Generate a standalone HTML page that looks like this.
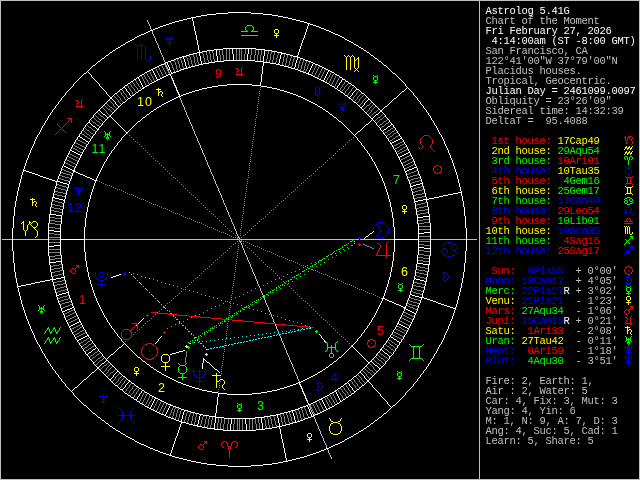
<!DOCTYPE html>
<html lang="en"><head><meta charset="utf-8"><title>Astrolog 5.41G - Chart of the Moment</title>
<style>
html,body{margin:0;padding:0;background:#000}
svg{display:block}
.t{font-family:"Liberation Mono",monospace;font-size:10.5px;letter-spacing:-.3px;white-space:pre}
.h{font-family:"Liberation Sans",sans-serif;font-size:12.5px;text-anchor:middle;letter-spacing:1px}
.g{fill:none;stroke-width:1;stroke-linecap:square}
</style></head><body>
<svg width="640" height="480" viewBox="0 0 640 480">
<defs><filter id="ga" filterUnits="userSpaceOnUse" x="0" y="0" width="640" height="480" color-interpolation-filters="sRGB"><feOffset dx="0" dy="0"/></filter></defs>
<rect width="640" height="480" fill="#000"/>
<g class="g" transform="translate(.5 .5)">
<path stroke="#ffffff" d="M228 12H250M216 13H227M251 13H262M207 14H215M263 14H271M201 15H206M272 15H277M196 16H200M278 16H282M191 17H195M283 17H287M187 18H190M288 18H291M183 19H186M292 19H295M179 20H182M296 20H299M175 21H178M300 21H303M172 22H174M304 22H306M169 23H171M307 23H309M166 24H168M310 24H312M163 25H165M313 25H315M160 26H162M316 26H318M158 27H159M319 27H320M155 28H157M321 28H323M153 29H154M324 29H325M150 30H152M326 30H328M148 31H149M329 31H330M146 32H147M331 32H332M144 33H145M333 33H334M141 34H143M335 34H337M139 35H140M338 35H339M137 36H138M340 36H341M135 37H136M342 37H343M132 39H133M345 39H346M130 40H131M347 40H348M128 41H129M349 41H350M126 42H127M351 42H352M123 44H124M354 44H355M121 45H122M356 45H357M118 47H119M359 47H360M116 48H117M223 48H255M361 48H362M214 49H222M256 49H264M113 50H114M207 50H213M264 50H271M364 50H365M202 51H206M272 51H276M110 52H111M197 52H201M277 52H281M367 52H368M193 53H196M281 53H285M189 54H192M286 54H289M106 55H107M186 55H188M290 55H292M371 55H372M182 56H185M293 56H297M179 57H181M297 57H299M102 58H103M176 58H178M300 58H302M375 58H376M174 59H175M303 59H304M171 60H173M224 60H254M305 60H307M98 61H99M168 61H170M215 61H223M255 61H263M308 61H310M379 61H380M166 62H167M209 62H214M263 62H269M311 62H312M164 63H165M203 63H208M270 63H275M313 63H314M161 64H163M199 64H202M276 64H279M315 64H317M93 65H94M159 65H160M195 65H198M280 65H283M318 65H319M384 65H385M157 66H158M191 66H194M284 66H287M320 66H321M155 67H156M188 67H190M288 67H290M322 67H323M153 68H154M184 68H187M291 68H294M324 68H325M151 69H152M181 69H183M295 69H297M326 69H327M149 70H150M179 70H180M298 70H299M328 70H329M147 71H148M176 71H178M300 71H302M330 71H331M145 72H146M173 72H175M303 72H305M332 72H333M84 73H85M171 73H172M306 73H308M393 73H394M142 74H143M168 74H170M308 74H310M335 74H336M140 75H141M166 75H167M311 75H312M337 75H338M164 76H165M313 76H314M137 77H138M162 77H163M315 77H316M340 77H341M160 78H161M317 78H318M134 79H135M157 79H159M319 79H320M342 79H344M156 80H157M321 80H323M131 81H132M154 81H155M323 81H324M346 81H347M152 82H153M325 82H326M128 83H129M150 83H151M327 83H328M349 83H350M227 84H251M125 85H126M147 85H148M218 85H226M252 85H260M330 85H331M352 85H353M145 86H146M212 86H217M261 86H266M332 86H333M123 87H124M143 87H144M207 87H211M267 87H271M142 88H143M202 88H206M272 88H276M335 88H336M120 89H121M199 89H201M277 89H279M356 89H358M139 90H140M195 90H198M280 90H283M338 90H339M192 91H194M284 91H286M402 91H403M136 92H137M189 92H191M287 92H289M341 92H342M115 93H116M186 93H188M290 93H292M362 93H363M183 94H185M293 94H295M132 95H133M181 95H182M296 95H297M345 95H346M178 96H180M298 96H300M110 97H111M176 97H177M301 97H302M348 97H349M110 98H111M128 98H129M174 98H175M303 98H304M349 98H350M394 98H395M172 99H173M305 99H306M368 99H369M170 100H171M307 100H308M168 101H169M309 101H310M123 102H124M166 102H167M311 102H312M354 102H355M164 103H165M313 103H314M162 104H163M315 104H316M118 106H119M159 106H160M318 106H319M385 106H386M157 107H158M320 107H321M360 107H361M154 109H155M323 109H324M98 110H99M380 110H381M151 111H152M326 111H327M380 111H381M103 114H104M147 114H148M330 114H331M376 114H377M109 116H110M107 117H108M143 117H144M334 117H335M371 118H372M138 121H139M339 121H340M88 122H89M366 124H367M391 124H392M93 126H94M388 126H389M97 129H98M384 129H385M358 131H359M126 132H127M78 136H79M80 137H81M400 138H401M83 139H84M398 139H399M396 140H397M86 141H87M394 141H395M392 142H393M390 143H391M70 150H71M72 151H73M74 152H75M408 152H409M76 153H77M406 153H407M78 154H79M404 154H405M80 155H81M402 155H403M400 156H401M398 157H399M64 166H65M66 167H67M414 167H416M68 168H69M412 168H413M70 169H71M409 169H411M23 170H25M72 170H74M407 170H408M26 171H28M73 171H75M405 171H406M29 172H31M76 172H77M32 173H34M78 173H79M35 174H37M80 174H82M38 175H39M83 175H84M40 176H42M85 176H86M43 177H45M87 177H89M46 178H48M90 178H91M49 179H51M92 179H93M52 180H54M94 180H96M55 181H59M60 182H62M63 183H66M420 183H422M67 184H68M416 184H419M413 185H415M410 186H412M458 192H461M453 193H457M448 194H452M443 195H447M439 196H442M52 197H54M434 197H438M55 198H58M429 198H433M59 199H62M423 199H428M63 200H64M418 200H422M414 201H417M49 214H55M56 215H61M423 216H429M417 217H422M48 230H53M54 231H60M424 232H430M370 233H371M418 233H423M366 236H367M60 239H84M394 239H418M54 245H60M48 246H53M418 247H423M424 248H430M56 261H61M49 262H55M417 263H422M423 264H429M119 274H120M116 275H118M113 276H115M61 277H64M111 277H112M56 278H60M414 278H415M50 279H55M416 279H419M45 280H49M420 280H423M40 281H44M424 281H426M35 282H39M31 283H34M26 284H30M21 285H25M17 286H20M66 292H68M62 293H65M59 294H61M410 294H411M56 295H58M412 295H414M415 296H418M419 297H423M382 298H384M424 298H426M385 299H386M427 299H429M387 300H388M430 300H432M389 301H391M433 301H435M392 302H393M436 302H437M394 303H395M438 303H440M396 304H398M441 304H443M399 305H400M444 305H446M401 306H402M447 306H449M72 307H73M403 307H405M450 307H452M70 308H71M404 308H405M453 308H455M67 309H69M406 309H407M65 310H66M408 310H409M62 311H64M410 311H411M412 312H413M414 313H415M79 321H80M77 322H78M75 323H76M397 323H398M73 324H74M399 324H400M71 325H72M401 325H402M69 326H70M403 326H404M405 327H406M407 328H408M87 335H88M85 336H86M83 337H84M391 337H392M81 338H82M79 339H80M394 339H395M77 340H78M397 341H398M399 342H400M351 346H352M119 347H120M93 349H94M380 349H381M183 350H184M179 351H182M89 352H90M176 352H178M172 353H175M385 353H386M86 354H87M111 354H112M170 354H171M389 356H390M138 357H139M339 357H340M203 359H204M106 360H107M143 361H144M334 361H335M370 361H371M207 362H208M368 362H369M102 363H103M147 364H148M330 364H331M375 365H376M97 367H98M151 367H152M326 367H327M97 368H98M379 368H380M154 369H155M215 369H216M323 369H324M117 371H118M157 371H158M320 371H321M92 372H93M159 372H160M318 372H319M359 372H360M162 374H163M315 374H316M164 375H165M313 375H314M123 376H124M166 376H167M311 376H312M354 376H355M168 377H169M309 377H310M170 378H171M307 378H308M84 379H85M109 379H110M172 379H173M305 379H306M128 380H129M174 380H175M303 380H304M349 380H350M367 380H368M129 381H130M176 381H177M301 381H302M367 381H368M178 382H180M298 382H300M132 383H133M181 383H182M296 383H297M345 383H346M183 384H185M293 384H295M115 385H116M186 385H188M290 385H292M362 385H363M136 386H137M189 386H191M287 386H289M341 386H342M75 387H76M192 387H194M284 387H286M139 388H140M195 388H198M280 388H283M338 388H339M120 389H122M199 389H201M277 389H279M357 389H358M142 390H143M202 390H206M272 390H276M335 390H336M207 391H211M267 391H271M334 391H335M354 391H355M145 392H146M212 392H217M261 392H266M332 392H333M125 393H126M147 393H148M218 393H226M252 393H260M330 393H331M352 393H353M227 394H251M128 395H129M150 395H151M327 395H328M349 395H350M152 396H153M325 396H326M131 397H132M154 397H155M323 397H324M346 397H347M155 398H157M321 398H322M134 399H136M158 399H159M319 399H321M343 399H344M160 400H161M317 400H318M137 401H138M162 401H163M315 401H316M340 401H341M164 402H165M313 402H314M140 403H141M166 403H167M311 403H312M337 403H338M142 404H143M168 404H170M308 404H310M335 404H336M84 405H85M170 405H172M306 405H307M393 405H394M145 406H146M173 406H175M303 406H305M332 406H333M147 407H148M176 407H178M300 407H302M330 407H331M149 408H150M179 408H180M298 408H299M328 408H329M151 409H152M181 409H183M295 409H297M326 409H327M153 410H154M184 410H187M291 410H294M324 410H325M155 411H156M188 411H190M288 411H290M322 411H323M157 412H158M191 412H194M284 412H287M320 412H321M93 413H94M159 413H160M195 413H198M280 413H283M318 413H319M384 413H385M161 414H163M199 414H202M276 414H279M315 414H317M164 415H165M203 415H208M270 415H275M313 415H314M166 416H167M209 416H215M264 416H269M311 416H312M98 417H99M168 417H170M215 417H223M255 417H263M308 417H310M379 417H380M171 418H173M224 418H254M305 418H307M174 419H175M303 419H304M102 420H103M176 420H178M300 420H302M375 420H376M179 421H181M297 421H299M181 422H185M293 422H296M106 423H107M186 423H188M290 423H292M371 423H372M189 424H192M286 424H289M193 425H197M282 425H285M110 426H111M197 426H201M277 426H281M367 426H368M202 427H206M272 427H276M113 428H114M207 428H214M265 428H271M364 428H365M214 429H222M256 429H264M116 430H117M223 430H255M361 430H362M118 431H119M359 431H360M121 433H122M356 433H357M123 434H124M354 434H355M126 436H127M351 436H352M128 437H129M349 437H350M130 438H131M347 438H348M132 439H133M345 439H346M135 441H136M342 441H343M137 442H138M340 442H341M139 443H140M338 443H339M141 444H143M335 444H337M144 445H145M333 445H334M146 446H147M331 446H332M148 447H149M329 447H330M150 448H152M326 448H328M153 449H154M324 449H325M155 450H157M321 450H323M158 451H159M319 451H320M160 452H162M316 452H318M163 453H165M313 453H315M166 454H168M310 454H312M169 455H171M307 455H309M172 456H174M304 456H306M175 457H178M300 457H303M179 458H182M296 458H299M183 459H186M292 459H295M187 460H190M288 460H291M191 461H195M283 461H287M196 462H200M278 462H282M201 463H206M272 463H277M207 464H215M263 464H271M216 465H227M251 465H262M228 466H250M12 228V250M13 216V227M13 251V262M14 207V215M14 263V271M15 201V206M15 272V277M16 196V200M16 278V282M17 191V195M17 283V285M17 287h0M18 187V190M18 288V291M19 183V186M19 292V295M20 179V182M20 296V299M21 175V178M21 300V303M22 172V174M22 304V306M23 169h0M23 171h0M23 307V309M24 166V168M24 310V312M25 163V165M25 313V315M26 160V162M26 316V318M27 158V159M27 319V320M28 155V157M28 321V323M29 153V154M29 324V325M30 150V152M30 326V328M31 148V149M31 329V330M32 146V147M32 331V332M33 144V145M33 333V334M34 141V143M34 335V337M35 139V140M35 338V339M36 137V138M36 340V341M37 135V136M37 342V343M38 134h0M38 344h0M39 132V133M39 345V346M40 130V131M40 347V348M41 128V129M41 349V350M42 126V127M42 351V352M43 125h0M43 353h0M44 123V124M44 354V355M45 121V122M45 356V357M46 120h0M46 358h0M47 118V119M47 359V360M48 116V117M48 223V229M48 231V245M48 247V255M48 361V362M49 115h0M49 215V222M49 256V261M49 263V264M49 363h0M50 113V114M50 207V213M50 265V271M50 364V365M51 112h0M51 202V206M51 272V276M51 366h0M52 110V111M52 198V201M52 277V278M52 280V281M52 367V368M53 109h0M53 193V196M53 282V285M53 369h0M54 108h0M54 189V192M54 286V289M54 370h0M55 106V107M55 186V188M55 290V292M55 371V372M56 105h0M56 182V185M56 293V294M56 296h0M56 373h0M57 104h0M57 179V180M57 297V299M57 374h0M58 102V103M58 176V178M58 300V302M58 375V376M59 101h0M59 174V175M59 303V304M59 377h0M60 100h0M60 171V173M60 224V230M60 232V238M60 240V244M60 246V254M60 305V307M60 378h0M61 98V99M61 168V170M61 216V223M61 255V260M61 262V263M61 308V310M61 379V380M62 97h0M62 166V167M62 209V214M62 264V269M62 312h0M62 381h0M63 96h0M63 164V165M63 203V208M63 270V275M63 313V314M63 382h0M64 95h0M64 161V163M64 199h0M64 201V202M64 276h0M64 278V279M64 315V317M64 383h0M65 93V94M65 159V160M65 195V198M65 280V283M65 318V319M65 384V385M66 92h0M66 157V158M66 191V194M66 284V287M66 320V321M66 386h0M67 91h0M67 155V156M67 188V190M67 288V290M67 322V323M67 387h0M68 90h0M68 153V154M68 185V187M68 291h0M68 293V294M68 324V325M68 388h0M69 89h0M69 151V152M69 181V183M69 295V297M69 327h0M69 389h0M70 88h0M70 149h0M70 179V180M70 298V299M70 328V329M70 390h0M71 87h0M71 147V148M71 176V178M71 300V302M71 330V331M71 391h0M72 86h0M72 145V146M72 173V175M72 303V305M72 332V333M72 390h0M72 392h0M73 84V85M73 144h0M73 172h0M73 306h0M73 334h0M73 389h0M73 393V394M74 83h0M74 142V143M74 168V169M74 308V310M74 335V336M74 388h0M74 395h0M75 82h0M75 140V141M75 166V167M75 311V312M75 337V338M75 396h0M76 81h0M76 139h0M76 164V165M76 313V314M76 339h0M76 397h0M77 80h0M77 137V138M77 162V163M77 315V316M77 341h0M77 386h0M77 398h0M78 79h0M78 160V161M78 317V318M78 342h0M78 385h0M78 399h0M79 78h0M79 134V135M79 158V159M79 319V320M79 343V344M79 384h0M79 400h0M80 77h0M80 133h0M80 156V157M80 322h0M80 345h0M80 383h0M80 401h0M81 76h0M81 131V132M81 154h0M81 323V324M81 346V347M81 382h0M81 402h0M82 75h0M82 130h0M82 138h0M82 152V153M82 325V326M82 348h0M82 381h0M82 403h0M83 74h0M83 128V129M83 150V151M83 327V328M83 349V350M83 380h0M83 404h0M84 127h0M84 149h0M84 227V238M84 240V251M84 329h0M84 351h0M85 125V126M85 140h0M85 147V148M85 218V226M85 252V260M85 330V331M85 352V353M86 72h0M86 124h0M86 145V146M86 212V217M86 261V266M86 332V333M86 378h0M86 406h0M87 71h0M87 123h0M87 144h0M87 207V211M87 267V271M87 334h0M87 355h0M87 377h0M87 407h0M88 70h0M88 72h0M88 142V143M88 202V206M88 272V276M88 336h0M88 353h0M88 356h0M88 376h0M88 408h0M89 69h0M89 73h0M89 120V121M89 141h0M89 199V201M89 277V279M89 337h0M89 357V358M89 375h0M89 409h0M90 68h0M90 74h0M90 119h0M90 123h0M90 139V140M90 195V198M90 280V283M90 338V339M90 359h0M90 374h0M90 410h0M91 67h0M91 75V76M91 118h0M91 124h0M91 138h0M91 192V194M91 284V286M91 340h0M91 351h0M91 360h0M91 373h0M91 411h0M92 66h0M92 77h0M92 117h0M92 125h0M92 136V137M92 189V191M92 287V289M92 341V342M92 350h0M92 361h0M92 412h0M93 78h0M93 115V116M93 135h0M93 186V188M93 290V292M93 343h0M93 362V363M94 79h0M94 114h0M94 134h0M94 183V185M94 293V295M94 344h0M94 364h0M94 371h0M95 64h0M95 80h0M95 113h0M95 127h0M95 132V133M95 181V182M95 296V297M95 345V346M95 348h0M95 365h0M95 370h0M95 414h0M96 63h0M96 81h0M96 112h0M96 128h0M96 131h0M96 178V179M96 298V300M96 347h0M96 366h0M96 369h0M96 415h0M97 62h0M97 82h0M97 111h0M97 130h0M97 176V177M97 301V302M97 348h0M97 416h0M98 83h0M98 128h0M98 174V175M98 303V304M98 349V350M99 84V85M99 109h0M99 127h0M99 172V173M99 305V306M99 351h0M99 366h0M99 369h0M100 60h0M100 86h0M100 108h0M100 111h0M100 126h0M100 170V171M100 307V308M100 352h0M100 365h0M100 370h0M100 418h0M101 59h0M101 87h0M101 107h0M101 112h0M101 125h0M101 168V169M101 309V310M101 353h0M101 364h0M101 371h0M101 419h0M102 88h0M102 106h0M102 113h0M102 123V124M102 166V167M102 311V312M102 354V355M102 372h0M103 89h0M103 105h0M103 122h0M103 164V165M103 313V314M103 356h0M103 373h0M104 57h0M104 90h0M104 104h0M104 121h0M104 162V163M104 315V316M104 357h0M104 362h0M104 374h0M104 421h0M105 56h0M105 91h0M105 103h0M105 115h0M105 120h0M105 161h0M105 317h0M105 358h0M105 361h0M105 375h0M105 422h0M106 92V93M106 102h0M106 116h0M106 119h0M106 159V160M106 318V319M106 359h0M106 376h0M107 94h0M107 101h0M107 118h0M107 157V158M107 320V321M107 358h0M107 377h0M108 54h0M108 95h0M108 100h0M108 156h0M108 322h0M108 357h0M108 361h0M108 378h0M108 424h0M109 53h0M109 96h0M109 99h0M109 154V155M109 323V324M109 356h0M109 362h0M109 425h0M110 115h0M110 153h0M110 325h0M110 355h0M110 363h0M110 380h0M111 114h0M111 117h0M111 151V152M111 326V327M111 364h0M111 378h0M111 381h0M112 51h0M112 96h0M112 99h0M112 113h0M112 118h0M112 150h0M112 328h0M112 365h0M112 377h0M112 382h0M112 427h0M113 95h0M113 100h0M113 112h0M113 119h0M113 149h0M113 329h0M113 353h0M113 366h0M113 375V376M113 383h0M114 94h0M114 101h0M114 111h0M114 120h0M114 147V148M114 330V331M114 352h0M114 367h0M114 374h0M114 384h0M115 49h0M115 102V103M115 110h0M115 121h0M115 146h0M115 332h0M115 351h0M115 368h0M115 373h0M115 429h0M116 104h0M116 109h0M116 122h0M116 145h0M116 333h0M116 350h0M116 369h0M116 372h0M117 92h0M117 105h0M117 108h0M117 123h0M117 143V144M117 334V335M117 349h0M117 370h0M117 386h0M118 91h0M118 107h0M118 124h0M118 142h0M118 336h0M118 348h0M118 387h0M119 90h0M119 125h0M119 141h0M119 337h0M119 372h0M119 388h0M120 46h0M120 105h0M120 126h0M120 140h0M120 338h0M120 373h0M120 432h0M121 104h0M121 127h0M121 138V139M121 339V340M121 346h0M121 374h0M122 88h0M122 103h0M122 128h0M122 137h0M122 341h0M122 345h0M122 375h0M122 390h0M123 129h0M123 136h0M123 342h0M123 344h0M123 388h0M123 391h0M124 86h0M124 130h0M124 135h0M124 343h0M124 387h0M124 392h0M125 43h0M125 88h0M125 101h0M125 131h0M125 134h0M125 344h0M125 377h0M125 385V386M125 435h0M126 89V90M126 100h0M126 133h0M126 345h0M126 378h0M126 384h0M127 84h0M127 91h0M127 99h0M127 346h0M127 379h0M127 383h0M127 394h0M128 92h0M128 131h0M128 347h0M128 382h0M129 93V94M129 130h0M129 348h0M130 82h0M130 95h0M130 97h0M130 129h0M130 349h0M130 396h0M131 96h0M131 128h0M131 350h0M131 382h0M132 127h0M132 351h0M133 80h0M133 126h0M133 352h0M133 398h0M134 38h0M134 94h0M134 125h0M134 353h0M134 384h0M134 440h0M135 93h0M135 124h0M135 354h0M135 385h0M136 78h0M136 123h0M136 325h0M136 355h0M136 400h0M137 122h0M137 356h0M137 397V398M138 78h0M138 91h0M138 323h0M138 387h0M138 396h0M139 76h0M139 79V80M139 322h0M139 394V395M139 402h0M140 81V82M140 120h0M140 321h0M140 358h0M140 393h0M141 83V84M141 89h0M141 119h0M141 320h0M141 359h0M141 389h0M141 391V392M142 85V86M142 118h0M142 319h0M142 360h0M143 318h0M144 73h0M144 391h0M144 405h0M145 116h0M145 362h0M146 115h0M146 363h0M149 84h0M149 113h0M149 365h0M149 394h0M150 112h0M150 366h0M150 407h0M151 405V406M152 70h0M152 403V404M153 71V72M153 110h0M153 368h0M153 401V402M154 73V74M154 399V400M155 75V76M155 343h0M156 77V78M156 108h0M156 342h0M156 370h0M157 341h0M158 339V340M159 338h0M160 337h0M161 105h0M161 336h0M161 373h0M165 414h0M166 412V413M167 63V64M167 410V411M168 65V66M168 408V409M169 67V69M169 406V407M170 70V71M170 75h0M170 453V454M171 72h0M171 76V77M171 450V452M172 78V79M172 447V449M173 80V82M173 444V446M174 83V84M174 441V443M175 85V86M175 438V440M176 87V89M176 436V437M177 90V91M177 433V435M178 92V93M178 430V432M179 94V95M179 427V429M180 424V426M181 419V420M181 423h0M182 415V418M183 57V58M183 412V414M184 59V61M184 411h0M185 62V65M186 66V67M192 18V20M193 21V25M194 26V30M195 31V34M196 35V39M197 40V44M197 424h0M198 45V49M198 420V423M199 50V51M199 53V55M199 416V419M200 56V60M200 415h0M201 61V63M202 363V368M203 358h0M203 360V362M205 360h0M206 361h0M209 363h0M210 364h0M211 365h0M212 366h0M213 367h0M214 368h0M214 423V427M215 413V415M215 418V422M216 50V55M216 405V412M217 56V60M217 370h0M217 397V404M218 371h0M218 394V396M219 372h0M230 424V429M231 419V423M232 49V53M233 54V59M245 419V423M246 424V429M247 54V59M248 49V53M260 82V84M261 74V81M261 418V422M262 66V73M262 423V428M263 56V60M263 63V65M264 51V55M277 415V417M278 63h0M278 418V422M279 59V62M279 423V425M279 427V428M280 55V58M280 429V433M281 54h0M281 434V438M282 439V442M283 443V447M284 448V452M285 453V457M286 458V460M292 411V412M293 413V415M294 67h0M294 416V419M295 63V66M295 420V421M296 60V62M297 55h0M297 58V59M298 52V54M299 49V51M299 383V384M300 46V48M300 385V386M301 43V45M301 387V388M302 40V42M302 389V391M303 38V39M303 392V393M304 35V37M304 394V395M305 32V34M305 396V398M306 29V31M306 399V400M307 26V28M307 401V402M307 406h0M308 24V25M308 72h0M308 403h0M308 407V408M309 70V71M309 409V411M310 68V69M310 412V413M311 66V67M311 414V415M312 64V65M317 105h0M317 373h0M319 334h0M320 335h0M321 336V337M322 108h0M322 338h0M322 370h0M322 400V401M323 339h0M323 402V403M324 78V79M324 340V341M324 404V405M325 76V77M325 110h0M325 342h0M325 368h0M325 406V407M326 74V75M326 408h0M327 72V73M328 71h0M328 112h0M328 366h0M329 84h0M329 113h0M329 365h0M329 394h0M332 115h0M332 363h0M333 116h0M333 362h0M334 73h0M334 87h0M334 405h0M336 118h0M336 360h0M336 392V393M337 86V87M337 89h0M337 119h0M337 359h0M337 389h0M337 394V395M338 85h0M338 120h0M338 358h0M338 396V397M339 76h0M339 83V84M339 398V399M339 402h0M340 82h0M340 91h0M340 387h0M340 400h0M341 80V81M341 122h0M341 356h0M342 78h0M342 123h0M342 355h0M342 400h0M343 93h0M343 124h0M343 354h0M343 385h0M344 38h0M344 94h0M344 125h0M344 353h0M344 384h0M344 440h0M345 80h0M345 126h0M345 352h0M345 398h0M346 127h0M346 351h0M347 96h0M347 128h0M347 350h0M347 382h0M348 82h0M348 129h0M348 349h0M348 381h0M348 383h0M348 396h0M349 130h0M349 348h0M349 384V385M350 96h0M350 131h0M350 347h0M350 386h0M351 84h0M351 95h0M351 99h0M351 132h0M351 379h0M351 387h0M351 394h0M352 93V94M352 100h0M352 133h0M352 345h0M352 378h0M352 388V389M353 43h0M353 92h0M353 101h0M353 134h0M353 344h0M353 347h0M353 377h0M353 390h0M353 435h0M354 86h0M354 91h0M354 135h0M354 343h0M354 348h0M354 392h0M355 87h0M355 90h0M355 134h0M355 136h0M355 342h0M355 349h0M356 88h0M356 103h0M356 133h0M356 137h0M356 341h0M356 350h0M356 375h0M356 390h0M357 104h0M357 132h0M357 138V139M357 339V340M357 351h0M357 374h0M358 46h0M358 105h0M358 140h0M358 338h0M358 352h0M358 373h0M358 432h0M359 90h0M359 106h0M359 141h0M359 337h0M359 353h0M359 388h0M360 91h0M360 130h0M360 142h0M360 336h0M360 354h0M360 371h0M360 387h0M361 92h0M361 108h0M361 129h0M361 143V144M361 334V335M361 355h0M361 370h0M361 373h0M361 386h0M362 106h0M362 109h0M362 128h0M362 145h0M362 333h0M362 356h0M362 369h0M362 374h0M363 49h0M363 105h0M363 110h0M363 127h0M363 146h0M363 332h0M363 357h0M363 368h0M363 375h0M363 429h0M364 94h0M364 103V104M364 111h0M364 126h0M364 147V148M364 238h0M364 330V331M364 358h0M364 367h0M364 376V377M364 384h0M365 95h0M365 102h0M365 112h0M365 125h0M365 149h0M365 237h0M365 329h0M365 359h0M365 366h0M365 378h0M365 383h0M366 51h0M366 96h0M366 101h0M366 113h0M366 150h0M366 328h0M366 360h0M366 365h0M366 379h0M366 382h0M366 427h0M367 97h0M367 100h0M367 114h0M367 151V152M367 326V327M367 361h0M367 364h0M368 98h0M368 115h0M368 123h0M368 153h0M368 235h0M368 325h0M368 363h0M369 53h0M369 116h0M369 122h0M369 154V155M369 234h0M369 323V324M369 379h0M369 382h0M369 425h0M370 54h0M370 100h0M370 117h0M370 121h0M370 156h0M370 322h0M370 378h0M370 383h0M370 424h0M371 101h0M371 120h0M371 157V158M371 320V321M371 360h0M371 377h0M371 384h0M372 102h0M372 119h0M372 159V160M372 232h0M372 318V319M372 359h0M372 362h0M372 376h0M372 385V386M373 56h0M373 103h0M373 117h0M373 120h0M373 161h0M373 231h0M373 317h0M373 358h0M373 363h0M373 375h0M373 387h0M373 422h0M374 57h0M374 104h0M374 116h0M374 121h0M374 162V163M374 315V316M374 357h0M374 364h0M374 374h0M374 388h0M374 421h0M375 105h0M375 115h0M375 122h0M375 164V165M375 313V314M375 356h0M375 373h0M375 389h0M376 106h0M376 123V124M376 166V167M376 311V312M376 354V355M376 372h0M376 390h0M377 59h0M377 107h0M377 125h0M377 168V169M377 309V310M377 353h0M377 366h0M377 371h0M377 391h0M377 419h0M378 60h0M378 108h0M378 113h0M378 126h0M378 170V171M378 307V308M378 352h0M378 367h0M378 370h0M378 392h0M378 418h0M379 109h0M379 112h0M379 127h0M379 172V173M379 305V306M379 351h0M379 369h0M379 393h0M380 128V129M380 174V175M380 303V304M380 350h0M380 394V395M381 62h0M381 130h0M381 176V177M381 301V302M381 348h0M381 367h0M381 396h0M381 416h0M382 63h0M382 109h0M382 112h0M382 131h0M382 178V180M382 299V300M382 347h0M382 350h0M382 366h0M382 397h0M382 415h0M383 64h0M383 108h0M383 113h0M383 130h0M383 132V133M383 181V182M383 296V297M383 345V346M383 351h0M383 365h0M383 398h0M383 414h0M384 107h0M384 114h0M384 134h0M384 183V185M384 293V295M384 344h0M384 352h0M384 364h0M384 399h0M385 115V116M385 135h0M385 186V188M385 290V292M385 343h0M385 362V363M385 400h0M386 66h0M386 117h0M386 128h0M386 136V137M386 189V191M386 287V289M386 341V342M386 361h0M386 401h0M386 412h0M387 67h0M387 105h0M387 118h0M387 127h0M387 138h0M387 192V194M387 284V286M387 340h0M387 354h0M387 360h0M387 402V403M387 411h0M388 68h0M388 104h0M388 119h0M388 139V140M388 195V198M388 280V283M388 338V339M388 355h0M388 359h0M388 404h0M388 410h0M389 69h0M389 103h0M389 120V121M389 141h0M389 199V201M389 277V279M389 337h0M389 357V358M389 405h0M389 409h0M390 70h0M390 102h0M390 122h0M390 125h0M390 142h0M390 202V206M390 272V276M390 335V336M390 406h0M390 408h0M391 71h0M391 101h0M391 123h0M391 144h0M391 207V211M391 267V271M391 334h0M391 355h0M391 407h0M392 72h0M392 100h0M392 145V146M392 212V217M392 261V266M392 332V333M392 354h0M392 406h0M393 99h0M393 125V126M393 147V148M393 218V226M393 252V260M393 330V331M393 338h0M393 352V353M394 127h0M394 149h0M394 227V238M394 240V251M394 329h0M394 351h0M395 74h0M395 128V129M395 150V151M395 327V328M395 349V350M395 404h0M396 75h0M396 97h0M396 130h0M396 152V153M396 325V326M396 340h0M396 348h0M396 403h0M397 76h0M397 96h0M397 131V132M397 154V155M397 324h0M397 346V347M397 402h0M398 77h0M398 95h0M398 133h0M398 156h0M398 321V322M398 345h0M398 401h0M399 78h0M399 94h0M399 134V135M399 158V159M399 319V320M399 343V344M399 400h0M400 79h0M400 93h0M400 136h0M400 160V161M400 317V318M400 399h0M401 80h0M401 92h0M401 137h0M401 162V163M401 315V316M401 340V341M401 398h0M402 81h0M402 139h0M402 164V165M402 313V314M402 339h0M402 397h0M403 82h0M403 140V141M403 166V167M403 311V312M403 337V338M403 396h0M404 83h0M404 90h0M404 142V143M404 168V170M404 309V310M404 335V336M404 395h0M405 84V85M405 89h0M405 144h0M405 172h0M405 306h0M405 334h0M405 393V394M406 86h0M406 88h0M406 145V146M406 173V175M406 303V305M406 332V333M406 392h0M407 87h0M407 147V148M407 176V178M407 300V302M407 330V331M407 391h0M408 88h0M408 149V150M408 179V180M408 298V299M408 329h0M408 390h0M409 89h0M409 151h0M409 181V183M409 295V297M409 326V327M409 389h0M410 90h0M410 153V154M410 184V185M410 187h0M410 291V293M410 324V325M410 388h0M411 91h0M411 155V156M411 188V190M411 288V290M411 322V323M411 387h0M412 92h0M412 157V158M412 191V194M412 284V287M412 320V321M412 386h0M413 93V94M413 159V160M413 195V198M413 280V283M413 318V319M413 384V385M414 95h0M414 161V163M414 199V200M414 202h0M414 276V277M414 279h0M414 315V317M414 383h0M415 96h0M415 164V165M415 203V208M415 270V275M415 314h0M415 382h0M416 97h0M416 166h0M416 209V214M416 264V269M416 311V312M416 381h0M417 98V99M417 168V170M417 215V216M417 218V223M417 255V262M417 308V310M417 379V380M418 100h0M418 171V173M418 224V232M418 234V238M418 240V246M418 248V254M418 305V307M418 378h0M419 101h0M419 174V175M419 303V304M419 377h0M420 102V103M420 176V178M420 300V302M420 375V376M421 104h0M421 179V181M421 298V299M421 374h0M422 105h0M422 182h0M422 184V185M422 293V296M422 373h0M423 106V107M423 186V188M423 290V292M423 371V372M424 108h0M424 189V192M424 286V289M424 370h0M425 109h0M425 193V196M425 282V285M425 369h0M426 110V111M426 197V198M426 200V201M426 277V280M426 367V368M427 112h0M427 202V206M427 272V276M427 366h0M428 113V114M428 207V213M428 265V271M428 364V365M429 115h0M429 214V215M429 217V222M429 256V263M429 363h0M430 116V117M430 223V231M430 233V247M430 249V255M430 361V362M431 118V119M431 359V360M432 120h0M432 358h0M433 121V122M433 356V357M434 123V124M434 354V355M435 125h0M435 353h0M436 126V127M436 351V352M437 128V129M437 349V350M438 130V131M438 347V348M439 132V133M439 345V346M440 134h0M440 344h0M441 135V136M441 342V343M442 137V138M442 340V341M443 139V140M443 338V339M444 141V143M444 335V337M445 144V145M445 333V334M446 146V147M446 331V332M447 148V149M447 329V330M448 150V152M448 326V328M449 153V154M449 324V325M450 155V157M450 321V323M451 158V159M451 319V320M452 160V162M452 316V318M453 163V165M453 313V315M454 166V168M454 310V312M455 169V171M455 307h0M455 309h0M456 172V174M456 304V306M457 175V178M457 300V303M458 179V182M458 296V299M459 183V186M459 292V295M460 187V190M460 288V291M461 191h0M461 193V195M461 283V287M462 196V200M462 278V282M463 201V206M463 272V277M464 207V215M464 263V271M465 216V227M465 251V262M466 228V250"/>
<path stroke="#c0c0c0" d="M0 0H639M2 239H11M13 239H47M85 239H238M240 239H353M355 239H358M360 239H393M431 239H465M467 239H476M0 479H639M0 1V478M147 20V21M148 22V23M149 24V25M150 26V28M151 29h0M152 31V33M153 34V35M154 36V37M155 38V40M156 41V42M157 43V44M158 45V47M159 48V49M160 50V52M161 53V54M162 55V56M163 57V59M164 60V61M165 62h0M165 64h0M166 65V66M167 67V68M168 69V70M169 72h0M171 78h0M172 80h0M173 83h0M174 85h0M175 87h0M176 90h0M177 92h0M178 94h0M179 97h0M180 98V99M181 100V102M182 103V104M183 105V106M184 107V109M185 110V111M186 112V114M187 115V116M188 117V118M189 119V121M190 122V123M191 124V125M192 126V128M193 129V130M194 131V133M195 134V135M196 136V137M197 138V140M198 141V142M199 143V144M200 145V147M201 148V149M202 150V152M203 153V154M204 155V156M205 157V159M206 160V161M207 162V164M208 165V166M209 167V168M210 169V171M211 172V173M212 174V175M213 176V178M214 179V180M215 181V183M216 184V185M217 186V187M218 188V190M219 191V192M220 193V194M221 195V197M222 198V199M223 200V202M224 203V204M225 205V206M226 207V209M227 210V211M228 212V214M229 215V216M230 217V218M231 219V221M232 222V223M233 224V225M234 226V228M235 229V230M236 231V233M237 234V235M238 236V237M239 238h0M239 240h0M240 241V242M241 243V244M242 245V247M243 248V249M244 250V252M245 253V254M246 255V256M247 257V259M248 260V261M249 262V263M250 264V266M251 267V268M252 269V271M253 272V273M254 274V275M255 276V278M256 279V280M257 281V283M258 284V285M259 286h0M260 288V290M261 291V292M262 293V294M263 295V297M264 298V299M265 300V302M266 303V304M267 305V306M268 307V309M269 310V311M270 312V313M271 314V316M272 317V318M273 319V321M274 322h0M275 324V325M276 326V328M277 329V330M278 331h0M278 333h0M279 335h0M280 336V337M281 338V340M282 341V342M283 343V344M284 345V347M285 348V349M286 350V352M287 353V354M288 355V356M289 357V359M290 360V361M291 362V363M292 364V366M293 367V368M294 369V371M295 372V373M296 374V375M297 376V378M298 379V380M299 381h0M300 384h0M301 386h0M302 388h0M303 391h0M304 393h0M305 395h0M306 398h0M307 400h0M309 405V406M310 407V409M311 410V411M312 412V413M313 414h0M313 416h0M314 417V418M315 419V421M316 422V423M317 424V425M318 426V428M319 429V430M320 431V433M321 434V435M322 436V437M323 438V440M324 441V442M325 443V444M326 445V447M327 449h0M328 450V452M329 453V454M330 455V456M331 457V458M479 1V478M639 1V478"/>
<path stroke="#808080" d="M367 105H368M110 107H111M108 109H109M374 112H375M101 116H102M378 117H379M99 119H100M380 119H381M97 121H98M384 121H385M93 122H94M386 123H387M380 124H381M97 125H98M382 126H383M89 127H90M391 128H392M87 130H88M93 130H94M388 130H389M392 131H393M385 132H386M91 133H92M394 133H395M82 134H83M87 134H88M388 134H389M85 136H86M390 136H391M396 136H397M88 138H89M393 138H394M78 140H79M390 140H391M80 141H81M82 142H83M400 142H401M76 143H77M84 143H85M398 143H399M78 144H79M396 144H397M402 144H403M80 145H81M394 145H395M400 145H401M75 146H76M82 146H83M77 147H78M397 147H398M403 147H404M73 148H74M79 148H80M395 148H396M75 149H76M81 149H82M400 149H401M406 149H407M404 150H405M78 151H79M397 151H398M402 151H403M80 152H81M400 152H401M398 153H399M70 154H71M72 155H73M409 155H410M74 156H75M407 156H408M69 157H70M76 157H77M405 157H406M71 158H72M403 158H404M73 159H74M401 159H402M409 159H410M67 160H68M75 160H76M407 160H408M69 161H70M405 161H406M412 161H413M71 162H72M403 162H404M410 162H411M66 163H67M73 163H74M408 163H409M68 164H69M406 164H407M413 164H414M70 165H71M404 165H405M411 165H412M72 166H73M409 166H410M407 167H408M405 168H406M62 169H63M64 170H65M66 171H68M414 171H415M61 172H62M69 172H70M411 172H413M63 173H65M409 173H410M66 174H69M407 174H408M417 174H418M60 175H61M70 175H71M413 175H416M62 176H64M410 176H412M65 177H68M408 177H409M418 177H419M59 178H60M69 178H70M414 178H417M61 179H63M411 179H413M64 180H67M409 180H410M419 180H420M415 181H418M412 182H414M410 183H411M57 184H58M59 185H61M62 186H65M421 186H422M56 187H57M66 187H67M417 187H420M58 188H60M414 188H416M61 189H64M412 189H413M422 189H423M65 190H66M418 190H421M55 191H57M415 191H417M58 192H62M413 192H414M63 193H65M422 193H424M54 194H56M416 194H421M57 195H61M414 195H415M62 196H64M422 196H424M417 197H421M414 198H416M53 200H54M55 201H57M58 202H61M425 202H426M421 203H424M52 204H54M417 204H420M55 205H59M60 206H62M424 206H426M51 207H53M419 207H423M54 208H59M416 208H418M60 209H61M425 209H427M51 210H53M419 210H424M54 211H58M417 211H418M59 212H61M426 212H427M420 213H425M417 214H419M50 217H54M55 218H60M423 219H428M50 220H54M418 220H422M55 221H60M424 222H428M49 223H54M418 223H423M55 224H59M419 226H429M49 227H54M55 228H59M419 229H429M49 233H53M54 234H59M419 236H429M49 237H59M49 239H59M419 239H429M419 241H429M49 242H59M363 244H364M419 244H423M365 245H366M424 245H429M367 246H369M370 247H371M372 248H373M49 249H59M419 250H423M424 251H429M49 252H59M419 254H423M55 255H60M424 255H429M50 256H54M418 257H422M55 258H60M423 258H428M50 259H54M418 260H422M423 261H428M59 264H61M53 265H58M51 266H52M417 266H419M60 267H61M420 267H424M54 268H59M425 268H427M51 269H53M417 269H418M60 270H62M419 270H424M55 271H59M425 271H427M52 272H54M416 272H418M419 273H423M58 274H61M424 274H426M54 275H57M52 276H53M417 276H419M420 277H423M424 278H425M62 280H64M57 281H61M54 282H56M414 282H416M63 283H64M417 283H421M57 284H62M422 284H424M54 285H56M413 285H415M64 286H65M416 286H420M60 287H63M421 287H423M57 288H59M412 288H413M55 289H56M65 289H66M414 289H416M61 290H64M417 290H420M58 291H60M411 291H412M421 291H422M56 292H57M413 292H415M416 293H419M420 294H421M67 295H68M63 296H66M60 297H62M58 298H59M68 298H69M411 298H413M64 299H67M414 299H417M61 300H63M408 300H409M418 300H419M59 301H60M69 301H70M410 301H412M65 302H68M413 302H416M62 303H64M407 303H408M417 303H418M60 304H61M70 304H71M409 304H411M68 305H69M412 305H415M65 306H67M408 306H409M416 306H417M63 307H64M410 307H412M413 308H414M415 309H416M71 310H72M69 311H70M67 312H68M404 312H405M65 313H66M72 313H73M406 313H407M70 314H71M408 314H409M68 315H69M403 315H404M410 315H411M66 316H67M74 316H75M405 316H406M412 316H413M72 317H73M407 317H408M70 318H71M402 318H403M409 318H410M68 319H69M75 319H76M404 319H405M411 319H412M73 320H74M406 320H407M71 321H72M400 321H401M408 321H409M69 322H70M402 322H403M404 323H405M406 324H407M78 325H79M408 325H409M76 326H77M397 326H398M74 327H75M80 327H81M399 327H400M72 328H73M77 329H78M396 329H397M402 329H403M82 330H83M398 330H399M404 330H405M74 331H75M80 331H81M400 331H401M394 332H395M402 332H403M77 333H78M83 333H84M396 333H397M75 334H76M81 334H82M398 334H399M79 335H80M393 335H394M400 335H401M77 336H78M395 336H396M402 336H403M397 337H398M87 338H88M399 338H400M84 340H85M389 340H390M88 341H89M81 342H82M392 342H393M84 344H85M89 344H90M395 344H396M391 345H392M92 346H93M387 346H388M85 347H86M89 348H90M385 349H386M391 349H392M86 350H87M95 352H96M389 352H390M97 354H98M381 354H382M91 355H92M93 357H94M385 357H386M98 358H99M381 358H382M100 360H101M379 360H380M377 363H378M104 365H105M370 370H371M111 372H112M368 372H369M62 203h0M62 273h0M62 308h0M64 314h0M65 162h0M65 317h0M66 159h0M67 320h0M68 156h0M68 181h0M68 323h0M69 153h0M71 173h0M71 329h0M72 147h0M73 309h0M73 332h0M74 145h0M74 167h0M74 312h0M75 142h0M75 164h0M76 315h0M76 330h0M76 337h0M77 139h0M77 150h0M77 161h0M77 318h0M78 158h0M79 328h0M79 332h0M80 324h0M80 343h0M81 133h0M82 346h0M83 130h0M83 341h0M83 345h0M84 131h0M84 135h0M84 147h0M84 348h0M85 128h0M85 132h0M85 332h0M85 351h0M86 129h0M86 133h0M86 144h0M86 339h0M86 343h0M87 125h0M87 137h0M87 342h0M87 346h0M88 126h0M88 345h0M88 349h0M89 131h0M89 135h0M90 132h0M90 136h0M90 340h0M90 356h0M91 120h0M91 128h0M91 137h0M91 343h0M91 347h0M91 359h0M92 121h0M92 129h0M92 358h0M93 117h0M93 134h0M93 354h0M94 118h0M94 345h0M94 353h0M94 362h0M95 115h0M95 119h0M95 123h0M95 131h0M95 356h0M95 361h0M96 116h0M96 120h0M96 124h0M96 355h0M96 360h0M96 364h0M97 112h0M97 117h0M97 180h0M97 351h0M97 359h0M97 363h0M98 113h0M98 118h0M98 362h0M99 114h0M99 122h0M99 126h0M99 181h0M99 353h0M99 361h0M100 115h0M100 123h0M100 357h0M100 369h0M101 120h0M101 124h0M101 182h0M101 356h0M101 368h0M102 107h0M102 121h0M102 359h0M102 367h0M103 108h0M103 117h0M103 183h0M103 358h0M103 366h0M103 372h0M104 105h0M104 109h0M104 118h0M104 371h0M105 106h0M105 110h0M105 119h0M105 184h0M105 370h0M105 374h0M106 103h0M106 107h0M106 111V112M106 364h0M106 368V369M106 373h0M107 104h0M107 108h0M107 113h0M107 185h0M107 363h0M107 367h0M107 372h0M107 376h0M108 105h0M108 114h0M108 362h0M108 366h0M108 370V371M108 375h0M109 100h0M109 106h0M109 115h0M109 185h0M109 365h0M109 369h0M109 374h0M110 101h0M110 110h0M110 364h0M110 368h0M110 373h0M111 102h0M111 111h0M111 186h0M111 367h0M112 103h0M112 108h0M112 112h0M112 366h0M112 381h0M113 104V105M113 109h0M113 187h0M113 371h0M113 380h0M114 96h0M114 106h0M114 110h0M114 370h0M114 379h0M115 97h0M115 107h0M115 188h0M115 369h0M115 377V378M115 383h0M116 94h0M116 98h0M116 108h0M116 376h0M116 382h0M117 95h0M117 99h0M117 189h0M117 375h0M117 381h0M117 385h0M118 96h0M118 100V101M118 374h0M118 379V380M118 384h0M119 91h0M119 97h0M119 102h0M119 189h0M119 373h0M119 378h0M119 383h0M120 92h0M120 98V99M120 103h0M120 377h0M120 381V382M120 387h0M121 93V94M121 100h0M121 190h0M121 376h0M121 380h0M121 385V386M122 90h0M122 95h0M122 101h0M122 379h0M122 384h0M123 91V92M123 96h0M123 191h0M123 378h0M123 383h0M124 93h0M124 97V98M124 377h0M124 381V382M125 94h0M125 99h0M125 192h0M125 341h0M125 380h0M125 391h0M126 95V96M126 379h0M126 389V390M127 85h0M127 97h0M127 133h0M127 193h0M127 388h0M128 86V87M128 387h0M128 393h0M129 88h0M129 135h0M129 194h0M129 385V386M129 391V392M130 84h0M130 89V90M130 384h0M130 390h0M130 395h0M131 85V86M131 91h0M131 137h0M131 194h0M131 383h0M131 389h0M131 394h0M132 82h0M132 87h0M132 92V93M132 387V388M132 393h0M133 83h0M133 88h0M133 94h0M133 139h0M133 195h0M133 334h0M133 386h0M133 391V392M133 397h0M134 84V85M134 89V90M134 385h0M134 390h0M134 395V396M135 80h0M135 86h0M135 91h0M135 141h0M135 196h0M135 332h0M135 389h0M135 394h0M136 81V82M136 87h0M136 388h0M136 392V393M137 83h0M137 88V89M137 142h0M137 197h0M137 330h0M137 387h0M137 391h0M138 84V85M138 90h0M138 389V390M139 86h0M139 144h0M139 198h0M139 329h0M139 401h0M140 87V88M140 399V400M141 76h0M141 146h0M141 199h0M141 327h0M141 397V398M142 77V78M142 395V396M142 402V403M143 79V80M143 148h0M143 199h0M143 325h0M143 393V394M143 400V401M144 75V76M144 81V82M144 392h0M144 398V399M145 77V78M145 83V84M145 150h0M145 200h0M145 323h0M145 396V397M145 404h0M146 73h0M146 79h0M146 85h0M146 394V395M146 402V403M147 74V75M147 80V81M147 152h0M147 201h0M147 321h0M147 400V401M147 406h0M148 76h0M148 82V83M148 398V399M148 404V405M149 71h0M149 77V78M149 154h0M149 202h0M149 320h0M149 396V397M149 402V403M150 72V73M150 79h0M150 401h0M151 74V75M151 80V81M151 156h0M151 203h0M151 318h0M151 399V400M152 76V77M152 397V398M153 78V79M153 158h0M153 204h0M153 316h0M153 408V409M154 80h0M154 406V407M155 68h0M155 160h0M155 204h0M155 314h0M155 404V405M156 69V70M156 402V403M156 410h0M157 71V72M157 161h0M157 205h0M157 312h0M157 400V401M157 408V409M158 67h0M158 73V74M158 406V407M159 68V69M159 75V76M159 163h0M159 206h0M159 311h0M159 404V405M159 411V412M160 70V71M160 77h0M160 402V403M160 409V410M161 65h0M161 72V73M161 165h0M161 207h0M161 309h0M161 401h0M161 407V408M162 66V67M162 74V75M162 405V406M162 412V413M163 68V69M163 76h0M163 167h0M163 208h0M163 307h0M163 403V404M163 410V411M164 64h0M164 70V71M164 408V409M165 65V66M165 72V73M165 169h0M165 208h0M165 305h0M165 406V407M166 67V68M166 74h0M166 404V405M167 69V70M167 171h0M167 209h0M167 303h0M168 71V72M169 73h0M169 173h0M169 210h0M169 302h0M169 415V416M170 62h0M170 413V414M171 63V64M171 175h0M171 211h0M171 300h0M171 410V412M172 65V67M172 408V409M172 416V417M173 68V69M173 177h0M173 212h0M173 298h0M173 407h0M173 412V415M174 60V61M174 70V71M174 409V411M175 62V64M175 178h0M175 213h0M175 296h0M175 407V408M175 417V418M176 65V68M176 413V416M177 59V60M177 69V70M177 180h0M177 213h0M177 295h0M177 410V412M178 61V63M178 408V409M178 418V419M179 64V67M179 182h0M179 214h0M179 293h0M179 414V417M180 58V59M180 68V69M180 411V413M181 60V62M181 184h0M181 215h0M181 291h0M181 410h0M182 63V66M183 67V68M183 186h0M183 216h0M183 289h0M184 420V421M185 188h0M185 217h0M185 287h0M185 357V362M185 416V419M186 56V57M186 351V356M186 413V415M187 58V60M187 190h0M187 218h0M187 286h0M187 411V412M187 421V422M188 61V64M188 417V420M189 55V56M189 65V66M189 192h0M189 218h0M189 284h0M189 414V416M190 57V59M190 412V413M191 60V63M191 194h0M191 219h0M191 282h0M191 421V423M192 64V65M192 416V420M193 54V56M193 195h0M193 220h0M193 280h0M193 413V415M194 57V62M194 422V424M195 63V64M195 197h0M195 221h0M195 278h0M195 417V421M196 54V56M196 414V416M197 57V61M197 199h0M197 222h0M197 277h0M198 62V64M199 201h0M199 222h0M199 275h0M200 424V425M201 203h0M201 223h0M201 273h0M201 420V423M202 52V53M202 417V419M203 54V57M203 205h0M203 224h0M203 271h0M203 416h0M204 58V61M204 424V426M205 62h0M205 207h0M205 225h0M205 269h0M205 419V423M206 52V54M206 416V418M207 55V59M207 209h0M207 226h0M207 268h0M207 425V427M208 60V62M208 419V424M209 51V53M209 211h0M209 227h0M209 266h0M209 417V418M210 54V59M210 425V427M211 60V61M211 213h0M211 227h0M211 264h0M211 420V424M212 51V52M212 417V419M213 53V58M213 214h0M213 228h0M213 262h0M214 59V61M215 216h0M215 229h0M215 260h0M217 218h0M217 230h0M217 259h0M217 423V428M218 389h0M218 391h0M218 418V422M219 50V54M219 220h0M219 231h0M219 257h0M219 383h0M219 385h0M219 387h0M220 55V60M220 377h0M220 381h0M220 423V428M221 222h0M221 232h0M221 255h0M221 367h0M221 369h0M221 371h0M221 373h0M221 418V422M222 50V54M222 361h0M222 363h0M222 365h0M223 55V60M223 224h0M223 232h0M223 253h0M223 353h0M223 355h0M223 357h0M223 359h0M223 424V429M224 345h0M224 347h0M224 349h0M224 351h0M224 419V423M225 226h0M225 233h0M225 252h0M225 339h0M225 341h0M225 343h0M226 49V59M226 331h0M226 333h0M226 335h0M226 337h0M227 228h0M227 234h0M227 250h0M227 323h0M227 325h0M227 327h0M227 329h0M227 424V429M228 321h0M228 419V423M229 49V59M229 230h0M229 235h0M229 248h0M229 309h0M229 311h0M229 313h0M229 315h0M230 301h0M230 303h0M230 305h0M230 307h0M231 231h0M231 236h0M231 246h0M231 295h0M231 297h0M232 287h0M232 289h0M232 291h0M232 293h0M233 233h0M233 237h0M233 244h0M233 281h0M233 283h0M233 285h0M233 424V429M234 273h0M234 275h0M234 277h0M234 279h0M234 419V423M235 235h0M235 237h0M235 243h0M235 265h0M235 267h0M235 269h0M235 271h0M236 49V59M236 259h0M236 261h0M236 263h0M237 237V238M237 241h0M237 251h0M237 253h0M237 255h0M237 257h0M237 419V429M238 243h0M238 245h0M238 247h0M238 249h0M239 49V59M239 237h0M239 239h0M239 241h0M239 419V429M240 229h0M240 231h0M240 233h0M240 235h0M241 49V59M241 221h0M241 223h0M241 225h0M241 227h0M241 237h0M241 240V241M242 215h0M242 217h0M242 219h0M242 419V429M243 207h0M243 209h0M243 211h0M243 213h0M243 235h0M243 241h0M243 243h0M244 54V59M244 199h0M244 201h0M244 203h0M244 205h0M245 49V53M245 193h0M245 195h0M245 197h0M245 234h0M245 241h0M245 245h0M246 185h0M246 187h0M246 189h0M246 191h0M247 179h0M247 181h0M247 183h0M247 232h0M247 242h0M247 247h0M248 171h0M248 173h0M248 175h0M248 177h0M249 163h0M249 165h0M249 167h0M249 169h0M249 230h0M249 243h0M249 248h0M249 419V429M250 55V59M250 157h0M250 159h0M250 161h0M251 49V54M251 149h0M251 151h0M251 153h0M251 155h0M251 228h0M251 244h0M251 250h0M252 141h0M252 143h0M252 145h0M252 147h0M252 419V429M253 135h0M253 137h0M253 139h0M253 226h0M253 245h0M253 252h0M254 55V59M254 127h0M254 129h0M254 131h0M254 133h0M255 49V54M255 119h0M255 121h0M255 123h0M255 125h0M255 225h0M255 246h0M255 254h0M255 418V423M256 113h0M256 115h0M256 117h0M256 424V428M257 55V60M257 105h0M257 107h0M257 109h0M257 111h0M257 223h0M257 246h0M257 256h0M258 50V54M258 97h0M258 99h0M258 101h0M258 103h0M258 418V422M259 91h0M259 93h0M259 95h0M259 221h0M259 247h0M259 258h0M259 423V428M260 55V60M260 87h0M260 89h0M261 50V54M261 219h0M261 248h0M261 260h0M263 218h0M263 249h0M263 262h0M264 417V419M265 216h0M265 250h0M265 264h0M265 420V425M266 59V61M266 426V427M267 54V58M267 214h0M267 251h0M267 266h0M267 417V418M268 51V53M268 419V424M269 60V61M269 212h0M269 251h0M269 267h0M269 425V427M270 54V59M270 416V418M271 51V53M271 210h0M271 252h0M271 269h0M271 419V423M272 60V62M272 424V426M273 55V59M273 209h0M273 253h0M273 271h0M273 416h0M274 52V54M274 417V420M275 62h0M275 207h0M275 254h0M275 273h0M275 421V424M276 58V61M276 425V426M277 55V57M277 205h0M277 255h0M277 275h0M278 53V54M279 203h0M279 256h0M279 277h0M280 414V416M281 201h0M281 256h0M281 279h0M281 417V421M282 62V64M282 422V424M283 57V61M283 200h0M283 257h0M283 281h0M283 414V415M284 54V56M284 416V421M285 63V65M285 198h0M285 258h0M285 422V424M286 58V62M286 413V414M287 55V57M287 196h0M287 259h0M287 284h0M287 415V417M288 65V66M288 418V421M289 61V64M289 194h0M289 260h0M289 286h0M289 412V413M289 422V423M290 58V60M290 414V416M291 56V57M291 66V67M291 192h0M291 260h0M291 288h0M291 417V420M292 62V65M292 421V422M293 59V61M293 191h0M293 261h0M293 290h0M294 57V58M295 189h0M295 262h0M295 292h0M295 410V411M296 412V414M297 68h0M297 187h0M297 263h0M297 294h0M297 415V418M298 64V67M298 409V410M298 419V420M299 61V63M299 185h0M299 264h0M299 296h0M299 411V413M300 59V60M300 69V70M300 414V417M301 65V68M301 183h0M301 265h0M301 298h0M301 408V409M301 418V419M302 62V64M302 410V412M303 60V61M303 70V71M303 182h0M303 265h0M303 300h0M303 413V416M304 66V69M304 407V408M304 417V418M305 63V65M305 71h0M305 180h0M305 266h0M305 301h0M305 409V410M306 61V62M306 69V70M306 411V413M307 66V68M307 178h0M307 267h0M307 303h0M307 414V415M308 64V65M308 416h0M309 62V63M309 176h0M309 305h0M310 405V406M311 74h0M311 175h0M311 269h0M311 307h0M311 407V408M312 72V73M312 409V410M313 70V71M313 173h0M313 270h0M313 309h0M313 404V405M313 411V412M314 68V69M314 75h0M314 406V407M314 413V414M315 66V67M315 73V74M315 171h0M315 270h0M315 311h0M315 402h0M315 408V409M316 65h0M316 71V72M316 403V404M316 410V411M317 69V70M317 77h0M317 169h0M317 271h0M317 313h0M317 405V406M317 412V413M318 67V68M318 75V76M318 407V408M319 66h0M319 73V74M319 167h0M319 272h0M319 315h0M319 401V402M319 409V410M320 71V72M320 78h0M320 403V404M320 411h0M321 69V70M321 76V77M321 166h0M321 273h0M321 317h0M321 405V406M322 68h0M322 74V75M322 407V408M323 72V73M323 164h0M323 274h0M323 319h0M323 409V410M324 70V71M325 69h0M325 162h0M325 274h0M325 320h0M325 398V399M326 80V81M326 400V401M327 78V79M327 160h0M327 275h0M327 322h0M327 397V398M327 402V403M328 77h0M328 399h0M328 404V405M329 75V76M329 81V82M329 158h0M329 276h0M329 324h0M329 400V401M329 406V407M330 73V74M330 79V80M330 395V396M330 402h0M331 72h0M331 77V78M331 84h0M331 157h0M331 277h0M331 326h0M331 397V398M331 403V404M332 75V76M332 82V83M332 393h0M332 399h0M332 405h0M333 74h0M333 80V81M333 155h0M333 278h0M333 328h0M333 394V395M333 400V401M334 78V79M334 86h0M334 396V397M334 402V403M335 76V77M335 84V85M335 153h0M335 279h0M335 330h0M335 398V399M336 75h0M336 82V83M336 400V401M337 80V81M337 151h0M337 279h0M337 332h0M337 402h0M338 78V79M338 390V391M339 77h0M339 149h0M339 280h0M339 334h0M339 392h0M340 88V89M340 388h0M340 393V394M341 87h0M341 91h0M341 148h0M341 281h0M341 336h0M341 389h0M341 395h0M342 85V86M342 90h0M342 390V391M342 396V397M343 84h0M343 89h0M343 146h0M343 282h0M343 337h0M343 387h0M343 392h0M343 398h0M344 82V83M344 87V88M344 93h0M344 388V389M344 393h0M345 81h0M345 86h0M345 91V92M345 144h0M345 283h0M345 339h0M345 384h0M345 390h0M345 394V395M346 85h0M346 90h0M346 385V386M346 391h0M346 396h0M347 84h0M347 89h0M347 95h0M347 142h0M347 284h0M347 341h0M347 387h0M347 392V393M348 83h0M348 87V88M348 93V94M348 388V389M348 394h0M349 86h0M349 92h0M349 140h0M349 284h0M349 343h0M349 390h0M350 85h0M350 91h0M350 391V392M351 89V90M351 139h0M351 285h0M351 345h0M351 381h0M351 393h0M352 88h0M352 99h0M352 382V383M353 87h0M353 97V98M353 137h0M353 286h0M353 379h0M353 384h0M354 96h0M354 101h0M354 380V381M354 385h0M355 95h0M355 100h0M355 287h0M355 382h0M355 386V387M356 93V94M356 99h0M356 377h0M356 383h0M356 388h0M357 92h0M357 97V98M357 102h0M357 288h0M357 378h0M357 384V385M358 91h0M358 96h0M358 101h0M358 375h0M358 379h0M358 386h0M359 95h0M359 99V100M359 105h0M359 289h0M359 376h0M359 380V381M359 387h0M360 94h0M360 98h0M360 104h0M360 377h0M360 382h0M361 93h0M361 97h0M361 103h0M361 289h0M361 378V379M361 383h0M362 96h0M362 101V102M362 370h0M362 380h0M362 384h0M363 95h0M363 100h0M363 109h0M363 290h0M363 371h0M363 381h0M364 99h0M364 108h0M364 368h0M364 372h0M364 382h0M365 98h0M365 107h0M365 291h0M365 369h0M365 373h0M366 97h0M366 106h0M366 112h0M366 366h0M366 370h0M366 374V375M367 111h0M367 292h0M367 367h0M367 371h0M367 376h0M368 110h0M368 114h0M368 368h0M368 377h0M369 104h0M369 108V109M369 113h0M369 293h0M369 363h0M369 369h0M369 378h0M370 103h0M370 107h0M370 112h0M370 116h0M370 364h0M370 373h0M371 102h0M371 106h0M371 110V111M371 115h0M371 293h0M371 365h0M371 374h0M372 105h0M372 109h0M372 114h0M372 366h0M372 371h0M372 375h0M373 104h0M373 108h0M373 113h0M373 294h0M373 359h0M373 367V368M373 372h0M374 107h0M374 360h0M374 369h0M374 373h0M375 106h0M375 120h0M375 295h0M375 361h0M375 370h0M376 111h0M376 119h0M376 357h0M376 362h0M376 371h0M377 110h0M377 118h0M377 122h0M377 296h0M377 354h0M377 358h0M378 109h0M378 121h0M378 355h0M378 359h0M379 120h0M379 125h0M379 297h0M379 352h0M379 356h0M379 364h0M380 116h0M380 353h0M380 357h0M380 365h0M381 115h0M381 127h0M381 298h0M381 361h0M381 366h0M382 114h0M382 118h0M382 123h0M382 362h0M383 117h0M383 122h0M383 347h0M383 355h0M383 359h0M383 363h0M384 116h0M384 125h0M384 133h0M384 348h0M384 356h0M384 360h0M385 124h0M385 344h0M385 361h0M386 120h0M386 345h0M387 119h0M387 131h0M387 135h0M387 341h0M387 350h0M387 358h0M388 122h0M388 138h0M388 342h0M388 351h0M389 137h0M389 343h0M389 347h0M390 129h0M390 133h0M390 344h0M390 348h0M391 132h0M391 341h0M391 353h0M392 135h0M392 139h0M392 334h0M393 127h0M393 134h0M393 146h0M393 346h0M393 350h0M394 130h0M394 343h0M394 347h0M395 137h0M395 348h0M396 132h0M397 345h0M398 135h0M399 146h0M399 150h0M401 317h0M401 328h0M401 339h0M402 141h0M402 148h0M402 163h0M404 333h0M405 146h0M406 331h0M407 305h0M410 297h0M410 322h0M411 158h0M416 170h0M416 205h0M416 275h0"/>
<path stroke="#ff0000" d="M236 68H237M236 74H243M76 100H77M76 106H83M67 118H71M70 119H71M424 135H428M630 136H631M624 137H625M628 137H629M630 139H631M436 165H438M434 166H435M439 166H440M434 172H435M439 172H440M436 173H438M626 177H631M626 183H631M627 218H629M624 221H627M629 221H632M624 223H632M377 243H378M358 244H360M376 255H390M76 265H78M77 266H78M627 266H629M625 267H626M630 267H631M72 268H73M72 273H73M625 273H626M630 273H631M627 274H629M630 306H632M631 307H632M626 309H627M151 312H156M157 313H167M168 314H177M626 314H627M146 315H148M178 315H188M189 316H199M200 317H210M625 317H626M211 318H221M222 319H227M229 319H231M232 320H242M243 321H253M254 322H264M132 323H137M265 323H275M625 323H632M136 324H137M276 324H285M286 325H296M297 326H307M308 327H309M311 327H313M124 329H128M129 330H130M163 332H165M124 339H128M370 339H372M368 340H369M373 340H374M147 343H151M145 344H146M152 344H153M368 346H369M373 346H374M370 347H372M145 358H146M152 358H153M147 359H151M204 441H206M223 441H225M233 441H235M205 442H206M200 444H201M200 449H201M55 134h0M56 133h0M57 124h0M57 132h0M58 125h0M58 131h0M59 126h0M59 130h0M60 127h0M60 129h0M61 128h0M62 127h0M62 129h0M63 126h0M63 130h0M64 125h0M64 131h0M65 124h0M65 132h0M66 123h0M67 122h0M68 121h0M69 120h0M70 270V271M71 120V122M71 269h0M71 272h0M74 269h0M74 272h0M75 268h0M75 270V271M76 105h0M76 267h0M77 103V104M78 101V102M78 267h0M81 100V105M81 107h0M82 99h0M121 332V336M122 331h0M122 337h0M123 330h0M123 338h0M129 338h0M130 331h0M130 337h0M131 329h0M131 332V336M132 328h0M133 327h0M134 326h0M135 325h0M137 325V328M141 349V353M142 347V348M142 354V355M143 346h0M143 356h0M144 345h0M144 357h0M147 314h0M147 316h0M149 351h0M154 345h0M154 357h0M155 346h0M155 356h0M156 347V348M156 354V355M157 349V353M164 331h0M164 333h0M198 446V447M199 445h0M199 448h0M202 445h0M202 448h0M203 444h0M203 446V447M204 443h0M206 443h0M221 443V445M222 442h0M222 446h0M223 447h0M226 442h0M227 443V445M228 446V449M229 450V457M230 446V449M231 443V445M232 442h0M235 447h0M236 73h0M236 442h0M236 446h0M237 71V72M237 443V445M238 69V70M241 68V73M241 75h0M242 67h0M359 243h0M359 245h0M367 342V344M368 341h0M368 345h0M371 343h0M374 341h0M374 345h0M375 342V344M376 254h0M377 252V253M378 250V251M379 244h0M379 248V249M380 245V247M386 243V254M386 256V257M387 242h0M388 241h0M418 147h0M419 148h0M420 139V143M420 149h0M421 138h0M421 144h0M421 148h0M422 137h0M422 145V147M423 136h0M429 136h0M430 137h0M430 145V147M431 138h0M431 144h0M431 148h0M432 139V143M432 149h0M433 150h0M433 168V170M434 151h0M434 167h0M434 171h0M437 169h0M440 167h0M440 171h0M441 168V170M624 269V271M624 311V312M625 136h0M625 138V140M625 176h0M625 184h0M625 268h0M625 272h0M625 310h0M625 313h0M625 322h0M626 141V143M626 219V220M626 320V321M627 138V140M627 178V182M627 318V319M628 136h0M628 270h0M628 310h0M628 313h0M629 138h0M629 309h0M629 311V312M630 178V182M630 219V220M630 308h0M630 317V322M630 324h0M631 140h0M631 144h0M631 268h0M631 272h0M631 316h0M632 137V138M632 141V143M632 176h0M632 184h0M632 269V271M632 308h0"/>
<path stroke="#ffff00" d="M275 29H277M275 33H277M274 35H278M357 58H358M354 60H355M156 89H160M160 91H161M158 92H159M625 147H626M628 147H629M627 148H628M630 148H631M625 152H626M628 152H629M627 153H628M630 153H631M626 187H631M626 193H631M30 199H34M34 201H35M32 202H33M403 205H405M403 209H405M402 211H406M33 221H35M22 222H23M29 222H30M33 227H35M630 234H631M627 296H629M627 300H629M626 302H630M625 327H629M629 329H630M627 330H628M189 343H190M185 346H187M163 354H167M205 354H207M163 362H167M161 366H169M135 367H137M135 371H137M134 373H138M212 375H220M220 379H222M216 381H218M331 421H332M338 421H339M333 422H337M331 423H332M338 423H339M308 433H310M331 433H332M338 433H339M333 434H337M308 437H310M307 439H311M21 223h0M23 221h0M23 223V229M24 230h0M25 231V235M26 230h0M27 225V229M28 224h0M29 221h0M29 223h0M30 224h0M31 223h0M31 225h0M32 198h0M32 200V201M32 203V205M32 222h0M32 226h0M34 228h0M35 204V205M35 229h0M35 237h0M36 202V203M36 206h0M36 222h0M36 226h0M36 230h0M36 236h0M37 223V225M37 231V235M134 368V370M136 372h0M136 374V375M138 368V370M158 88h0M158 90V91M158 93V95M161 94V95M161 356V360M162 92V93M162 96h0M162 355h0M162 361h0M165 363V365M165 367V370M168 355h0M168 361h0M169 356V360M186 345h0M186 347h0M206 349h0M206 353h0M206 355h0M216 373V374M216 376V380M216 382V387M219 380h0M222 385V387M223 380h0M223 384h0M223 388h0M224 381V383M224 389h0M274 30V32M276 34h0M276 36V37M278 30V32M307 434V436M309 438h0M309 440V441M311 434V436M329 418h0M329 426V430M330 419V420M330 424V425M330 431V432M340 419V420M340 424V425M340 431V432M341 418h0M341 426V430M344 55h0M345 56h0M346 57V69M347 56h0M348 55h0M349 56h0M350 57V69M351 56h0M352 55h0M353 56h0M354 57V59M354 61V67M354 71h0M354 241h0M354 243h0M355 68h0M355 70h0M356 59h0M356 69h0M357 68h0M357 70h0M358 57h0M358 59V67M358 71h0M402 206V208M404 210h0M404 212V213M406 206V208M624 149h0M624 154h0M624 226h0M625 148h0M625 153h0M625 186h0M625 194h0M625 227V233M626 146h0M626 151h0M626 226h0M626 297V299M627 149h0M627 154h0M627 188V192M627 227V233M627 326h0M627 328V329M627 331V333M628 226h0M628 301h0M628 303V304M629 146h0M629 151h0M629 227V233M630 149h0M630 154h0M630 188V192M630 297V299M630 332V333M631 147h0M631 152h0M631 330V331M631 334h0M632 146h0M632 151h0M632 186h0M632 194h0M632 232V233"/>
<path stroke="#00ff00" d="M247 25H251M241 31H247M251 31H257M241 35H257M374 76H376M374 80H376M373 82H377M105 134H109M106 137H108M625 156H626M630 156H631M627 197H629M625 198H626M630 198H631M625 200H626M630 201H631M625 203H626M630 203H631M627 204H629M630 236H632M631 237H632M350 241H351M344 245H345M351 245H352M338 249H339M330 254H331M326 256H327M323 258H324M319 260H321M314 264H315M308 268H309M302 271H303M296 275H297M290 279H291M399 284H401M627 287H629M399 288H401M272 290H273M398 290H402M627 291H629M626 293H630M266 294H267M255 302H256M244 307H246M39 308H43M243 309H244M40 311H42M224 321H225M47 328H48M53 328H54M212 328H213M315 331H317M50 332H51M56 332H57M47 338H48M53 338H54M626 339H630M50 342H51M56 342H57M627 342H629M411 346H421M187 347H189M327 347H335M330 353H332M330 357H332M411 358H421M180 365H184M398 372H400M180 373H184M398 376H400M178 377H186M397 378H401M238 404H240M238 408H240M237 410H241M38 305h0M38 310h0M39 306V307M39 309h0M40 312h0M41 307h0M41 309V310M41 313h0M42 312h0M43 306V307M43 309h0M44 305h0M44 310h0M44 333h0M44 343h0M45 331V332M45 341V342M46 330h0M46 340h0M47 329h0M47 339h0M48 327h0M48 337h0M49 329V331M49 339V341M50 333h0M50 343h0M51 331h0M51 341h0M52 330h0M52 340h0M53 329h0M53 339h0M54 327h0M54 337h0M55 329V331M55 339V341M56 333h0M56 343h0M57 331h0M57 341h0M58 330h0M58 340h0M59 328V329M59 338V339M60 327h0M60 337h0M104 131h0M104 136h0M105 132V133M105 135h0M106 138h0M107 133h0M107 135V136M107 139h0M108 138h0M109 132V133M109 135h0M110 131h0M110 136h0M133 273h0M137 274h0M141 276h0M145 277h0M149 278h0M153 279h0M157 280h0M161 282h0M165 283h0M167 328h0M169 284h0M171 326h0M173 285h0M175 324h0M177 286h0M178 363h0M178 367V371M179 323h0M179 364h0M179 366h0M179 372h0M181 288h0M182 374V376M182 378V379M183 321h0M185 289h0M185 364h0M185 366h0M185 372h0M186 363h0M186 367V371M187 319h0M188 342h0M188 346h0M188 348h0M189 290h0M190 341h0M191 317h0M192 340h0M192 342h0M193 291h0M194 338h0M195 315h0M195 340h0M196 337h0M197 292h0M198 336h0M198 338h0M199 314h0M200 335h0M201 294h0M201 336h0M202 333h0M203 312h0M204 332V334M205 295h0M206 331h0M207 310h0M207 332h0M208 330h0M209 296h0M210 328h0M210 330h0M211 308h0M212 327h0M213 297h0M214 326h0M215 306h0M216 325h0M216 327h0M217 298h0M218 323h0M219 305h0M219 325h0M220 322V323M221 300h0M222 321h0M222 323h0M223 303h0M224 320h0M225 301h0M226 318h0M227 301h0M228 317V319M229 302h0M230 316h0M231 299h0M231 317h0M232 315V316M233 303h0M234 313h0M234 315h0M235 297h0M236 312h0M236 314h0M237 304h0M237 313h0M237 403h0M237 405V407M238 311h0M239 296h0M239 409h0M239 411h0M240 310V311M241 305h0M241 403h0M241 405V407M242 308h0M243 294h0M245 27V29M246 26h0M246 30h0M246 306h0M247 292h0M248 305h0M248 307h0M249 306h0M249 308h0M250 304h0M251 290h0M252 26h0M252 30h0M252 302h0M252 304h0M253 27V29M253 309h0M254 301h0M255 288h0M256 300h0M257 310h0M258 299V300M259 287h0M260 297h0M260 299h0M261 298h0M261 311h0M262 296h0M263 285h0M264 295V297M265 313h0M267 283h0M268 292h0M268 295h0M269 314h0M270 291V292M271 281h0M272 292h0M273 315h0M274 289h0M275 279h0M276 287V288M276 290h0M277 316h0M278 286h0M279 278h0M279 287h0M280 285h0M280 288h0M281 317h0M282 284V285M283 276h0M284 282h0M284 285h0M285 283h0M285 319h0M286 281h0M287 274h0M288 280V281M288 283h0M289 320h0M291 272h0M292 277h0M292 281h0M293 321h0M294 276V277M295 271h0M296 278h0M297 322h0M298 274h0M299 269h0M300 273h0M300 276h0M301 323h0M303 267h0M304 270h0M304 274h0M305 325h0M306 269h0M307 265h0M308 271h0M309 326h0M310 266h0M311 263h0M312 265V266M312 269h0M315 262h0M316 263h0M316 266h0M316 330h0M316 332h0M318 261V262M320 264h0M322 259h0M324 262h0M325 341h0M325 351h0M326 342h0M326 350h0M327 343V346M327 348V349M328 255h0M328 259h0M329 354V356M331 345V346M331 348V352M332 253h0M332 257h0M333 252h0M333 354V356M334 251h0M335 253h0M335 343V346M335 348V349M336 250h0M336 255h0M336 342h0M336 350h0M337 341h0M337 351h0M339 251h0M340 248h0M340 252h0M342 246V247M343 249h0M344 250h0M346 244h0M347 247h0M348 243h0M348 248h0M352 240h0M354 239h0M373 75h0M373 77V79M375 81h0M375 83h0M377 75h0M377 77V79M397 371h0M397 373V375M398 283h0M398 285V287M399 377h0M399 379h0M400 289h0M400 291h0M401 371h0M401 373V375M402 283h0M402 285V287M409 344h0M409 360h0M410 345h0M410 359h0M413 347V357M419 347V357M422 345h0M422 359h0M423 344h0M423 360h0M624 157V158M624 199h0M624 201V202M624 244h0M625 159h0M625 239h0M625 243h0M625 336h0M625 341h0M626 240h0M626 242h0M626 286h0M626 288V290M626 337V338M626 340h0M627 157V159M627 201V202M627 241h0M627 343h0M628 160V164M628 240h0M628 242h0M628 292h0M628 294h0M628 338h0M628 340V341M628 344h0M629 157V159M629 199V200M629 239h0M629 243h0M629 343h0M630 238h0M630 286h0M630 288V290M630 337V338M630 340h0M631 159h0M631 336h0M631 341h0M632 157V158M632 199V200M632 202h0M632 238h0"/>
<path stroke="#0000ff" d="M168 41H170M167 43H171M149 56H151M147 60H148M341 107H343M340 109H344M627 168H629M627 174H629M74 188H75M77 188H79M81 188H82M77 191H79M76 193H80M627 206H629M378 222H382M383 223H384M383 237H384M358 238H360M378 238H382M447 242H451M444 243H446M453 244H455M630 246H632M631 247H632M443 248H445M453 250H455M443 254H445M452 255H454M447 256H451M100 272H102M443 272H445M123 273H125M446 273H447M100 276H102M626 276H628M629 277H630M97 279H98M104 279H105M446 279H447M99 280H103M443 280H445M629 283H630M97 284H105M626 284H628M624 347H625M627 347H629M631 347H632M627 350H629M626 352H630M627 360H629M626 362H630M192 371H194M197 371H201M204 371H206M195 376H196M202 376H203M197 377H201M195 381H203M317 382H319M320 383H321M320 389H321M317 390H319M99 396H100M102 396H104M106 396H107M102 399H104M101 401H105M118 415H134M75 187h0M75 189h0M76 190h0M78 187h0M78 189V190M78 192h0M78 194V195M80 190h0M81 187h0M81 189h0M95 272V276M96 277V278M99 273V275M100 395h0M100 397h0M101 281V283M101 285V288M101 398h0M103 273V275M103 395h0M103 397V398M103 400h0M103 402V403M105 398h0M106 277V278M106 395h0M106 397h0M107 272V276M118 407h0M118 423h0M119 408h0M119 422h0M120 409h0M120 421h0M121 410V411M121 419V420M122 412V414M122 416V418M124 272h0M124 274h0M130 412V414M130 416V418M131 410V411M131 419V420M132 409h0M132 421h0M133 408h0M133 422h0M134 407h0M134 423h0M135 44h0M136 45h0M137 46V58M138 45h0M139 44h0M140 45h0M141 46V58M142 45h0M143 44h0M144 45h0M145 46V58M146 59h0M149 59h0M150 55h0M150 57V58M166 37V39M167 40h0M168 38h0M169 37h0M169 39h0M169 42h0M169 44V45M170 38h0M171 40h0M172 37V39M193 369V370M193 372V373M194 374V375M199 369V370M199 372V376M199 378V380M199 382V385M204 354h0M204 374V375M205 353h0M205 355h0M205 369V370M205 372V373M316 383h0M316 389h0M317 384h0M317 388h0M318 385V387M321 384h0M321 388h0M322 385V387M339 103V105M340 106h0M341 104h0M342 103h0M342 105h0M342 108h0M342 110V111M343 104h0M344 106h0M345 103V105M359 237h0M359 239h0M376 224h0M376 236h0M377 223h0M377 225h0M377 235h0M377 237h0M378 226h0M378 234h0M379 227V228M379 232V233M380 229V231M385 224h0M385 236h0M386 225h0M386 235h0M387 226V227M387 233V234M388 228V232M441 246h0M441 250V252M442 245h0M442 249h0M442 253h0M442 273h0M442 279h0M443 244h0M443 274h0M443 278h0M444 275V277M446 249h0M446 253h0M446 255h0M447 250V252M447 274h0M447 278h0M448 275V277M451 246V248M452 243h0M452 245h0M452 249h0M455 254h0M456 245h0M456 249h0M456 253h0M457 246V248M457 252h0M624 212h0M624 254h0M625 166h0M625 170V172M625 208V210M625 213h0M625 249h0M625 253h0M625 277h0M625 283h0M625 346h0M625 348h0M625 356V358M626 167h0M626 169h0M626 173h0M626 207h0M626 211V212M626 250h0M626 252h0M626 278h0M626 282h0M626 349h0M626 359h0M627 251h0M627 279V281M627 357h0M628 250h0M628 252h0M628 346h0M628 348V349M628 351h0M628 353V354M628 356h0M628 358h0M628 361h0M628 363V364M629 249h0M629 253h0M629 357h0M630 167h0M630 169h0M630 173h0M630 207h0M630 211V212M630 248h0M630 278h0M630 282h0M630 349h0M630 359h0M631 166h0M631 170V172M631 208V210M631 213h0M631 279V281M631 346h0M631 348h0M631 356V358M632 214h0M632 248h0"/>
<path stroke="#00ffff" d="M170 313H171M176 319H177M182 325H183M306 328H307M309 328H310M303 329H304M297 330H298M188 331H189M294 331H295M288 332H289M282 333H283M285 333H286M279 334H280M273 335H274M270 336H271M194 337H195M264 337H265M258 338H259M255 339H256M249 340H250M246 341H247M240 342H241M200 343H201M234 343H235M231 344H232M225 345H226M222 346H223M216 347H217M210 348H211M207 349H208M129 272h0M131 274h0M133 276h0M134 277h0M135 278h0M137 280h0M139 282h0M140 283h0M141 284h0M143 286h0M145 288h0M146 289h0M147 290h0M149 292h0M151 294h0M152 295h0M153 296h0M155 298h0M157 300h0M158 301h0M159 302h0M161 304h0M163 306h0M164 307h0M165 308h0M167 310h0M169 311h0M173 315V316M175 317h0M179 321V322M181 323h0M185 327V328M187 329h0M191 333V334M193 335h0M194 342h0M197 339V340M198 342h0M199 341h0M202 341h0M203 345V346M205 347h0M206 341h0M210 340h0M213 348h0M214 340h0M214 347h0M218 339h0M219 347h0M220 346h0M222 339h0M226 338h0M228 345h0M229 344h0M230 338h0M234 337h0M237 343h0M238 337h0M238 342h0M242 336h0M243 342h0M244 341h0M246 336h0M250 335h0M252 340h0M253 339h0M254 335h0M258 334h0M261 338h0M262 334h0M262 337h0M266 333h0M267 337h0M268 336h0M270 333h0M274 332h0M276 335h0M277 334h0M278 332h0M282 331h0M286 331h0M290 330h0M291 332h0M292 331h0M294 329h0M298 329h0M300 330h0M301 329h0M302 328h0M310 327h0"/>
</g>
<g class="h" filter="url(#ga)">
<text x="83" y="304" fill="#ff0000">1</text>
<text x="162" y="392" fill="#ffff00">2</text>
<text x="261" y="410" fill="#00ff00">3</text>
<text x="335" y="382" fill="#0000ff">4</text>
<text x="381" y="335" fill="#ff0000">5</text>
<text x="405" y="276" fill="#ffff00">6</text>
<text x="397" y="184" fill="#00ff00">7</text>
<text x="318" y="96" fill="#0000ff">8</text>
<text x="219" y="78" fill="#ff0000">9</text>
<text x="145" y="106" fill="#ffff00">10</text>
<text x="99" y="153" fill="#00ff00">11</text>
<text x="75" y="212" fill="#0000ff">12</text>
</g>
<g class="t" filter="url(#ga)">
<text x="485.5" y="14" fill="#ffffff" xml:space="preserve">Astrolog 5.41G</text>
<text x="485.5" y="24" fill="#c0c0c0" xml:space="preserve">Chart of the Moment</text>
<text x="485.5" y="34" fill="#ffffff" xml:space="preserve">Fri February 27, 2026</text>
<text x="485.5" y="44" fill="#ffffff" xml:space="preserve"> 4:14:00am (ST -8:00 GMT)</text>
<text x="485.5" y="54" fill="#c0c0c0" xml:space="preserve">San Francisco, CA</text>
<text x="485.5" y="64" fill="#c0c0c0" xml:space="preserve">122°41'00&quot;W 37°79'00&quot;N</text>
<text x="485.5" y="74" fill="#c0c0c0" xml:space="preserve">Placidus houses.</text>
<text x="485.5" y="84" fill="#c0c0c0" xml:space="preserve">Tropical, Geocentric.</text>
<text x="485.5" y="94" fill="#ffffff" xml:space="preserve">Julian Day = 2461099.0097</text>
<text x="485.5" y="104" fill="#c0c0c0" xml:space="preserve">Obliquity = 23°26'09&quot;</text>
<text x="485.5" y="114" fill="#c0c0c0" xml:space="preserve">Sidereal time: 14:32:39</text>
<text x="485.5" y="124" fill="#c0c0c0" xml:space="preserve">DeltaT =  95.4088</text>
<text x="485.5" y="144" fill="#ff0000" xml:space="preserve"> 1st house: </text>
<text x="557.5" y="144" fill="#ffff00" xml:space="preserve">17Cap49</text>
<text x="485.5" y="154" fill="#ffff00" xml:space="preserve"> 2nd house: </text>
<text x="557.5" y="154" fill="#00ff00" xml:space="preserve">29Aqu54</text>
<text x="485.5" y="164" fill="#00ff00" xml:space="preserve"> 3rd house: </text>
<text x="557.5" y="164" fill="#ff0000" xml:space="preserve">10Ari01</text>
<text x="485.5" y="174" fill="#0000ff" xml:space="preserve"> 4th house: </text>
<text x="557.5" y="174" fill="#ffff00" xml:space="preserve">10Tau35</text>
<text x="485.5" y="184" fill="#ff0000" xml:space="preserve"> 5th house: </text>
<text x="557.5" y="184" fill="#00ff00" xml:space="preserve"> 4Gem16</text>
<text x="485.5" y="194" fill="#ffff00" xml:space="preserve"> 6th house: </text>
<text x="557.5" y="194" fill="#00ff00" xml:space="preserve">25Gem17</text>
<text x="485.5" y="204" fill="#00ff00" xml:space="preserve"> 7th house: </text>
<text x="557.5" y="204" fill="#0000ff" xml:space="preserve">17Can49</text>
<text x="485.5" y="214" fill="#0000ff" xml:space="preserve"> 8th house: </text>
<text x="557.5" y="214" fill="#ff0000" xml:space="preserve">29Leo54</text>
<text x="485.5" y="224" fill="#ff0000" xml:space="preserve"> 9th house: </text>
<text x="557.5" y="224" fill="#00ff00" xml:space="preserve">10Lib01</text>
<text x="485.5" y="234" fill="#ffff00" xml:space="preserve">10th house: </text>
<text x="557.5" y="234" fill="#0000ff" xml:space="preserve">10Sco35</text>
<text x="485.5" y="244" fill="#00ff00" xml:space="preserve">11th house: </text>
<text x="557.5" y="244" fill="#ff0000" xml:space="preserve"> 4Sag16</text>
<text x="485.5" y="254" fill="#0000ff" xml:space="preserve">12th house: </text>
<text x="557.5" y="254" fill="#ff0000" xml:space="preserve">25Sag17</text>
<text x="485.5" y="274" fill="#ff0000" xml:space="preserve"> Sun: </text>
<text x="521.5" y="274" fill="#0000ff" xml:space="preserve"> 8Pis55</text>
<text x="575.5" y="274" fill="#c0c0c0" xml:space="preserve">+ 0°00'</text>
<text x="485.5" y="284" fill="#0000ff" xml:space="preserve">Moon: </text>
<text x="521.5" y="284" fill="#0000ff" xml:space="preserve">18Can17</text>
<text x="575.5" y="284" fill="#c0c0c0" xml:space="preserve">+ 4°05'</text>
<text x="485.5" y="294" fill="#00ff00" xml:space="preserve">Merc: </text>
<text x="521.5" y="294" fill="#0000ff" xml:space="preserve">22Pis27</text>
<text x="563.5" y="294" fill="#ffffff" xml:space="preserve">R</text>
<text x="575.5" y="294" fill="#c0c0c0" xml:space="preserve">+ 3°02'</text>
<text x="485.5" y="304" fill="#ffff00" xml:space="preserve">Venu: </text>
<text x="521.5" y="304" fill="#0000ff" xml:space="preserve">21Pis21</text>
<text x="575.5" y="304" fill="#c0c0c0" xml:space="preserve">- 1°23'</text>
<text x="485.5" y="314" fill="#ff0000" xml:space="preserve">Mars: </text>
<text x="521.5" y="314" fill="#00ff00" xml:space="preserve">27Aqu34</text>
<text x="575.5" y="314" fill="#c0c0c0" xml:space="preserve">- 1°06'</text>
<text x="485.5" y="324" fill="#ff0000" xml:space="preserve">Jupi: </text>
<text x="521.5" y="324" fill="#0000ff" xml:space="preserve">15Can19</text>
<text x="563.5" y="324" fill="#ffffff" xml:space="preserve">R</text>
<text x="575.5" y="324" fill="#c0c0c0" xml:space="preserve">+ 0°21'</text>
<text x="485.5" y="334" fill="#ffff00" xml:space="preserve">Satu: </text>
<text x="521.5" y="334" fill="#ff0000" xml:space="preserve"> 1Ari33</text>
<text x="575.5" y="334" fill="#c0c0c0" xml:space="preserve">- 2°08'</text>
<text x="485.5" y="344" fill="#00ff00" xml:space="preserve">Uran: </text>
<text x="521.5" y="344" fill="#ffff00" xml:space="preserve">27Tau42</text>
<text x="575.5" y="344" fill="#c0c0c0" xml:space="preserve">- 0°11'</text>
<text x="485.5" y="354" fill="#0000ff" xml:space="preserve">Nept: </text>
<text x="521.5" y="354" fill="#ff0000" xml:space="preserve"> 0Ari59</text>
<text x="575.5" y="354" fill="#c0c0c0" xml:space="preserve">- 1°18'</text>
<text x="485.5" y="364" fill="#0000ff" xml:space="preserve">Plut: </text>
<text x="521.5" y="364" fill="#00ff00" xml:space="preserve"> 4Aqu30</text>
<text x="575.5" y="364" fill="#c0c0c0" xml:space="preserve">- 3°51'</text>
<text x="485.5" y="384" fill="#c0c0c0" xml:space="preserve">Fire: 2, Earth: 1,</text>
<text x="485.5" y="394" fill="#c0c0c0" xml:space="preserve">Air : 2, Water: 5</text>
<text x="485.5" y="404" fill="#c0c0c0" xml:space="preserve">Car: 4, Fix: 3, Mut: 3</text>
<text x="485.5" y="414" fill="#c0c0c0" xml:space="preserve">Yang: 4, Yin: 6</text>
<text x="485.5" y="424" fill="#c0c0c0" xml:space="preserve">M: 1, N: 9, A: 7, D: 3</text>
<text x="485.5" y="434" fill="#c0c0c0" xml:space="preserve">Ang: 4, Suc: 5, Cad: 1</text>
<text x="485.5" y="444" fill="#c0c0c0" xml:space="preserve">Learn: 5, Share: 5</text>
</g>
</svg>
</body></html>
